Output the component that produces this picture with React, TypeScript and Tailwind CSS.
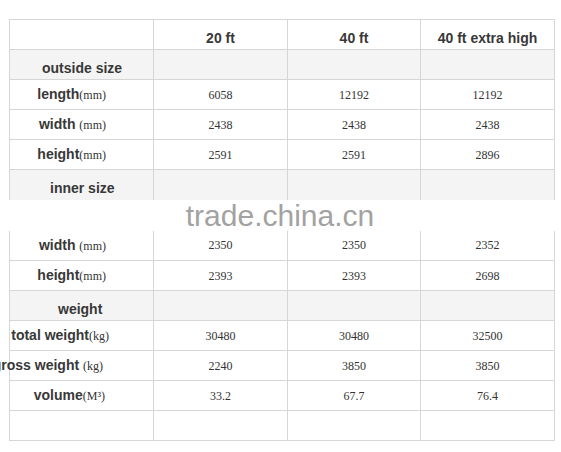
import React from 'react'

type Row = {
  label: string
  unit?: string
  pr?: string
  values: string[]
}

const outside: Row[] = [
  { label: 'length', unit: '(mm)', pr: 'pr-[47px]', values: ['6058', '12192', '12192'] },
  { label: 'width ', unit: '(mm)', pr: 'pr-[47px]', values: ['2438', '2438', '2438'] },
  { label: 'height', unit: '(mm)', pr: 'pr-[47px]', values: ['2591', '2591', '2896'] },
]

const inner: Row[] = [
  { label: 'width ', unit: '(mm)', pr: 'pr-[47px]', values: ['2350', '2350', '2352'] },
  { label: 'height', unit: '(mm)', pr: 'pr-[47px]', values: ['2393', '2393', '2698'] },
]

const weight: Row[] = [
  { label: 'total weight', unit: '(kg)', pr: 'pr-[44px]', values: ['30480', '30480', '32500'] },
  { label: 'gross weight ', unit: '(kg)', pr: 'pr-[50px]', values: ['2240', '3850', '3850'] },
  { label: 'volume', unit: '(M³)', pr: 'pr-[48px]', values: ['33.2', '67.7', '76.4'] },
]

const cell = 'h-[30px] border border-[#d6d6d6] p-0'
const sans = "font-['Liberation_Sans',Arial,sans-serif]"
const serif = "font-['Liberation_Serif','Times_New_Roman',serif]"

function DataRow({ row }: { row: Row }) {
  return (
    <tr>
      <td className={cell}>
        <div className={`flex justify-end items-baseline whitespace-nowrap ${row.pr}`}>
          <span className={`${sans} text-[14px] font-bold text-[#383838] whitespace-pre`}>{row.label}</span>
          <span className={`${serif} text-[12px] text-[#333]`}>{row.unit}</span>
        </div>
      </td>
      {row.values.map((v, i) => (
        <td key={i} className={`${cell} ${serif} text-center text-[12px] text-[#333]`}>
          {v}
        </td>
      ))}
    </tr>
  )
}

function SectionRow({ title, pad }: { title: string; pad: string }) {
  return (
    <tr className="bg-[#f4f4f4]">
      <td className={`${cell} ${sans} text-[14px] font-bold text-[#383838] pt-2 ${pad}`}>{title}</td>
      <td className={cell}></td>
      <td className={cell}></td>
      <td className={cell}></td>
    </tr>
  )
}

export default function App() {
  return (
    <div className="w-[561px] h-[452px] bg-white overflow-hidden pt-[19px] pl-[9px]">
      <table className="w-[545px] table-fixed border-collapse">
        <colgroup>
          <col className="w-[144px]" />
          <col className="w-[134px]" />
          <col className="w-[133px]" />
          <col className="w-[134px]" />
        </colgroup>
        <tbody>
          {/* header */}
          <tr>
            <td className={cell}></td>
            {['20 ft', '40 ft', '40 ft extra high'].map((h) => (
              <td key={h} className={`${cell} ${sans} text-center text-[14px] font-bold text-[#383838] pt-2`}>
                {h}
              </td>
            ))}
          </tr>

          <SectionRow title="outside size" pad="pl-[32px]" />
          {outside.map((r) => (
            <DataRow key={r.label} row={r} />
          ))}

          <SectionRow title="inner size" pad="pl-[40px]" />
          {/* watermark band */}
          <tr>
            <td colSpan={4} className="h-[30px] border-hidden p-0 bg-white text-center">
              <span className={`${sans} text-[30px] leading-none text-[#a2a2a2] relative top-[1px] ml-[-4px]`}>trade.china.cn</span>
            </td>
          </tr>
          {inner.map((r) => (
            <DataRow key={r.label} row={r} />
          ))}

          <SectionRow title="weight" pad="pl-[48px]" />
          {weight.map((r) => (
            <DataRow key={r.label} row={r} />
          ))}

          <tr>
            <td className={cell}></td>
            <td className={cell}></td>
            <td className={cell}></td>
            <td className={cell}></td>
          </tr>
        </tbody>
      </table>
    </div>
  )
}
